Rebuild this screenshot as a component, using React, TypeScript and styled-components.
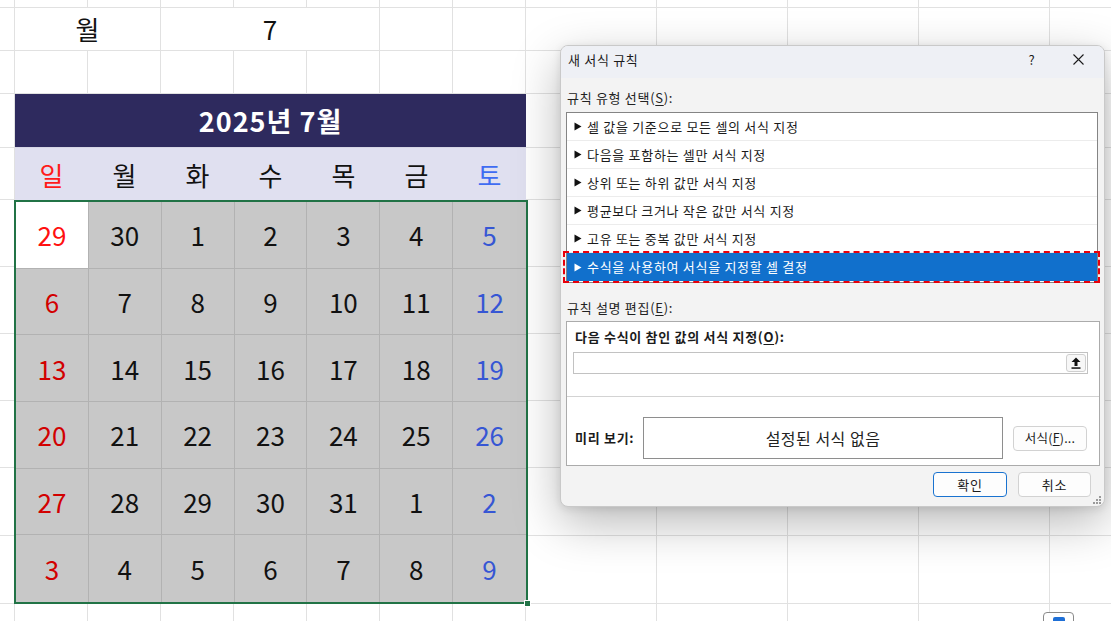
import React from "react";
import styled, { createGlobalStyle, css } from "styled-components";

const GlobalStyle = createGlobalStyle`
  html, body { margin: 0; padding: 0; background: #fff; }
  body { font-family: "Noto Sans CJK KR", "Noto Sans", sans-serif; overflow: hidden; }
  * { box-sizing: border-box; }
`;

const COLS = [15, 73, 73, 73, 73, 73, 73, 73, 131, 131, 131, 131, 131];
const ROWS = [8, 43, 43, 54, 52, 67, 67, 67, 67, 68, 68, 60];
const GRID = "#e1e1e1";
const KR = `"Noto Sans CJK KR", "Noto Sans", sans-serif`;

const Page = styled.div`
  position: relative;
  width: 1111px;
  height: 621px;
  overflow: hidden;
  background: #fff;
`;

const Sheet = styled.div`
  display: grid;
  grid-template-columns: ${COLS.map((c) => `${c}px`).join(" ")};
  grid-template-rows: ${ROWS.map((r) => `${r}px`).join(" ")};
  font-family: ${KR};
`;

const Cell = styled.div<{ $r: number; $c: number; $cs?: number }>`
  grid-row: ${(p) => p.$r};
  grid-column: ${(p) => p.$c} / span ${(p) => p.$cs ?? 1};
  border-right: 1px solid ${GRID};
  border-bottom: 1px solid ${GRID};
  display: flex;
  align-items: center;
  justify-content: center;
  font-size: 26px;
  color: #111;
  line-height: 1;
`;

const Calendar = styled.div`
  grid-row: 4 / span 8;
  grid-column: 2 / span 7;
  display: flex;
  flex-direction: column;
  position: relative;
`;

const CalHeader = styled.div`
  height: 54px;
  background: #2e2a5e;
  color: #fff;
  font-weight: 700;
  font-size: 27px;
  letter-spacing: 1px;
  display: flex;
  align-items: center;
  justify-content: center;
  border-bottom: 1px solid #d6d6e6;
`;

const WeekRow = styled.div`
  height: 52px;
  background: #e0e0f0;
  display: grid;
  grid-template-columns: repeat(7, 1fr);
`;

type Tone = "sun" | "sat" | "normal";
const toneColor = (t: Tone, white?: boolean) =>
  t === "sun" ? (white ? "#ff1010" : "#d20000") : t === "sat" ? "#3656d4" : "#111";

const WeekName = styled.div<{ $tone: Tone }>`
  display: flex;
  align-items: center;
  justify-content: center;
  font-size: 26px;
  color: ${(p) => (p.$tone === "sun" ? "#ff1a1a" : p.$tone === "sat" ? "#3f6cf2" : "#111")};
`;

const DayGrid = styled.div`
  flex: 1;
  position: relative;
  margin: 0 -2px 0 -1px;
  border: 2px solid #217346;
  display: grid;
  grid-template-columns: repeat(7, 1fr);
  grid-template-rows: repeat(6, 1fr);
`;

const DayCell = styled.div<{ $tone: Tone; $white?: boolean }>`
  background: ${(p) => (p.$white ? "#fff" : "#c8c8c8")};
  border-right: 1px solid #b2b2b2;
  border-bottom: 1px solid #b2b2b2;
  display: flex;
  align-items: center;
  justify-content: center;
  font-size: 26px;
  color: ${(p) => toneColor(p.$tone, p.$white)};
  &:nth-child(7n) { border-right: none; }
  &:nth-last-child(-n + 8) { border-bottom: none; }
`;

const FillHandle = styled.div`
  position: absolute;
  right: -5px;
  bottom: -5px;
  width: 7px;
  height: 7px;
  background: #217346;
  border: 1px solid #fff;
`;

/* ---------------- Dialog ---------------- */

const Dialog = styled.div`
  position: absolute;
  left: 560px;
  top: 45px;
  width: 545px;
  height: 462px;
  background: #f3f3f3;
  border: 1px solid #c9c9c9;
  border-radius: 8px;
  box-shadow: 0 16px 48px rgba(0, 0, 0, 0.28), 0 2px 8px rgba(0, 0, 0, 0.1);
  font-family: ${KR};
  font-size: 13px;
  letter-spacing: 0.7px;
  color: #1b1b1b;
  display: flex;
  flex-direction: column;
  overflow: hidden;
`;

const TitleBar = styled.div`
  height: 32px;
  flex: none;
  background: #eef0f5;
  display: flex;
  align-items: center;
  padding: 0 3px 5px 7px;
`;

const Title = styled.div`
  flex: 1;
  line-height: 20px;
`;

const TitleButton = styled.div`
  width: 46px;
  height: 26px;
  display: flex;
  align-items: center;
  justify-content: center;
  font-size: 13px;
`;

const Body = styled.div`
  flex: 1;
  display: flex;
  flex-direction: column;
  padding: 10px 4px 0 5px;
  position: relative;
`;

const Label = styled.div<{ $gap?: number }>`
  line-height: 20px;
  margin-top: ${(p) => p.$gap ?? 0}px;
  padding-left: 1px;
  color: #222;
`;

const U = styled.span`
  text-decoration: underline;
  text-underline-offset: 2px;
`;

const RuleList = styled.div`
  margin-top: 4px;
  height: 171px;
  width: 532px;
  background: #fff;
  border: 1px solid #848484;
  display: flex;
  flex-direction: column;
`;

const RuleItem = styled.div<{ $selected?: boolean }>`
  height: 28px;
  flex: none;
  display: flex;
  align-items: center;
  gap: 5px;
  padding-left: 7px;
  line-height: 20px;
  border-bottom: 1px solid #ececec;
  position: relative;
  ${(p) =>
    p.$selected &&
    css`
      background: #1170cc;
      color: #fff;
      border-bottom: none;
      &::after {
        content: "";
        position: absolute;
        inset: -2px -3px -2px -4px;
        border: 2px dashed #e8000b;
        pointer-events: none;
      }
    `}
`;

const Tri = styled.svg`
  flex: none;
`;

const DescBox = styled.div`
  margin-top: 3px;
  width: 534px;
  height: 145px;
  background: #fff;
  border: 1px solid #ababab;
  display: flex;
  flex-direction: column;
  padding: 5px 11px 0 6px;
`;

const BoldLabel = styled.div`
  font-weight: 700;
  line-height: 20px;
  padding-left: 2px;
`;

const FormulaInput = styled.div`
  margin-top: 5px;
  height: 22px;
  border: 1px solid #c2c2c2;
  background: #fff;
  display: flex;
  justify-content: flex-end;
  align-items: stretch;
  padding: 1px;
`;

const PickButton = styled.div`
  width: 20px;
  border: 1px solid #cfcfcf;
  border-radius: 3px;
  background: #f7f7f7;
  display: flex;
  align-items: center;
  justify-content: center;
`;

const Separator = styled.div`
  margin: 22px -11px 0 -6px;
  height: 1px;
  background: #d3d3d3;
`;

const PreviewRow = styled.div`
  margin-top: 20px;
  display: flex;
  align-items: center;
  padding-left: 2px;
`;

const PreviewLabel = styled.div`
  font-weight: 700;
  width: 68px;
  flex: none;
  line-height: 20px;
`;

const PreviewBox = styled.div`
  width: 360px;
  height: 42px;
  border: 1px solid #8e8e8e;
  background: #fff;
  display: flex;
  align-items: center;
  justify-content: center;
  font-size: 16px;
  letter-spacing: 0.5px;
  color: #222;
`;

const Btn = styled.div<{ $primary?: boolean; $w: number }>`
  width: ${(p) => p.$w}px;
  height: 25px;
  border-radius: 4px;
  background: #fdfdfd;
  border: 1px solid ${(p) => (p.$primary ? "#1a73d0" : "#d2d2d2")};
  display: flex;
  align-items: center;
  justify-content: center;
  font-size: 13px;
  line-height: 20px;
  color: #1b1b1b;
`;

const FormatBtn = styled(Btn)`
  margin-left: 10px;
  font-size: 12.5px;
  letter-spacing: 0.2px;
`;

const ButtonRow = styled.div`
  margin-top: 6px;
  display: flex;
  justify-content: flex-end;
  gap: 11px;
  padding-right: 9px;
`;

const Grip = styled.svg`
  position: absolute;
  right: 3px;
  bottom: 2px;
`;

const QuickAnalysis = styled.div`
  position: absolute;
  left: 1043px;
  top: 612px;
  width: 31px;
  height: 22px;
  border: 1px solid #8a8a8a;
  border-radius: 4px;
  background: #fff;
  display: flex;
  justify-content: center;
  padding-top: 4px;
`;

const QAIcon = styled.div`
  width: 12px;
  height: 10px;
  border-radius: 2px;
  background: #1e6fd6;
`;

const rules = [
  "셀 값을 기준으로 모든 셀의 서식 지정",
  "다음을 포함하는 셀만 서식 지정",
  "상위 또는 하위 값만 서식 지정",
  "평균보다 크거나 작은 값만 서식 지정",
  "고유 또는 중복 값만 서식 지정",
  "수식을 사용하여 서식을 지정할 셀 결정",
];

const weekNames = ["일", "월", "화", "수", "목", "금", "토"];
const days = [
  [29, 30, 1, 2, 3, 4, 5],
  [6, 7, 8, 9, 10, 11, 12],
  [13, 14, 15, 16, 17, 18, 19],
  [20, 21, 22, 23, 24, 25, 26],
  [27, 28, 29, 30, 31, 1, 2],
  [3, 4, 5, 6, 7, 8, 9],
];

function toneOf(i: number): Tone {
  return i === 0 ? "sun" : i === 6 ? "sat" : "normal";
}

function BackgroundCells() {
  const cells: React.ReactNode[] = [];
  for (let r = 1; r <= ROWS.length; r++) {
    for (let c = 1; c <= COLS.length; c++) {
      if (r >= 4 && r <= 11 && c >= 2 && c <= 8) continue;
      if (r === 2) {
        if (c === 2) {
          cells.push(
            <Cell key={`${r}-${c}`} $r={r} $c={2} $cs={2}>
              월
            </Cell>
          );
          continue;
        }
        if (c === 4) {
          cells.push(
            <Cell key={`${r}-${c}`} $r={r} $c={4} $cs={3}>
              7
            </Cell>
          );
          continue;
        }
        if (c === 3 || c === 5 || c === 6) continue;
      }
      cells.push(<Cell key={`${r}-${c}`} $r={r} $c={c} />);
    }
  }
  return <>{cells}</>;
}

function Triangle({ color }: { color: string }) {
  return (
    <Tri width="8" height="9" viewBox="0 0 8 9">
      <polygon points="0.5,0.5 7.5,4.5 0.5,8.5" fill={color} />
    </Tri>
  );
}

export default function App() {
  return (
    <Page>
      <GlobalStyle />
      <Sheet>
        <BackgroundCells />
        <Calendar>
          <CalHeader>2025년 7월</CalHeader>
          <WeekRow>
            {weekNames.map((w, i) => (
              <WeekName key={w} $tone={toneOf(i)}>
                {w}
              </WeekName>
            ))}
          </WeekRow>
          <DayGrid>
            {days.map((row, ri) =>
              row.map((d, ci) => (
                <DayCell key={`${ri}-${ci}`} $tone={toneOf(ci)} $white={ri === 0 && ci === 0}>
                  {d}
                </DayCell>
              ))
            )}
            <FillHandle />
          </DayGrid>
        </Calendar>
      </Sheet>

      <QuickAnalysis>
        <QAIcon />
      </QuickAnalysis>

      <Dialog>
        <TitleBar>
          <Title>새 서식 규칙</Title>
          <TitleButton>?</TitleButton>
          <TitleButton>
            <svg width="11" height="11" viewBox="0 0 11 11">
              <path d="M0.5 0.5 L10.5 10.5 M10.5 0.5 L0.5 10.5" stroke="#1b1b1b" strokeWidth="1.1" />
            </svg>
          </TitleButton>
        </TitleBar>
        <Body>
          <Label>
            규칙 유형 선택(<U>S</U>):
          </Label>
          <RuleList>
            {rules.map((r, i) => {
              const sel = i === rules.length - 1;
              return (
                <RuleItem key={r} $selected={sel}>
                  <Triangle color={sel ? "#fff" : "#111"} />
                  {r}
                </RuleItem>
              );
            })}
          </RuleList>
          <Label $gap={15}>
            규칙 설명 편집(<U>E</U>):
          </Label>
          <DescBox>
            <BoldLabel>
              다음 수식이 참인 값의 서식 지정(<U>O</U>):
            </BoldLabel>
            <FormulaInput>
              <PickButton>
                <svg width="10" height="12" viewBox="0 0 10 12">
                  <path d="M5 0.5 L9.5 5 L6.5 5 L6.5 9 L3.5 9 L3.5 5 L0.5 5 Z" fill="#111" />
                  <rect x="0.5" y="10.3" width="9" height="1.5" fill="#111" />
                </svg>
              </PickButton>
            </FormulaInput>
            <Separator />
            <PreviewRow>
              <PreviewLabel>미리 보기:</PreviewLabel>
              <PreviewBox>설정된 서식 없음</PreviewBox>
              <FormatBtn $w={74}>
                서식(<U>F</U>)...
              </FormatBtn>
            </PreviewRow>
          </DescBox>
          <ButtonRow>
            <Btn $primary $w={74}>
              확인
            </Btn>
            <Btn $w={73}>취소</Btn>
          </ButtonRow>
          <Grip width="8" height="8" viewBox="0 0 8 8">
            <rect x="6" y="0" width="2" height="2" fill="#9a9a9a" />
            <rect x="3" y="3" width="2" height="2" fill="#9a9a9a" />
            <rect x="6" y="3" width="2" height="2" fill="#9a9a9a" />
            <rect x="0" y="6" width="2" height="2" fill="#9a9a9a" />
            <rect x="3" y="6" width="2" height="2" fill="#9a9a9a" />
            <rect x="6" y="6" width="2" height="2" fill="#9a9a9a" />
          </Grip>
        </Body>
      </Dialog>
    </Page>
  );
}
